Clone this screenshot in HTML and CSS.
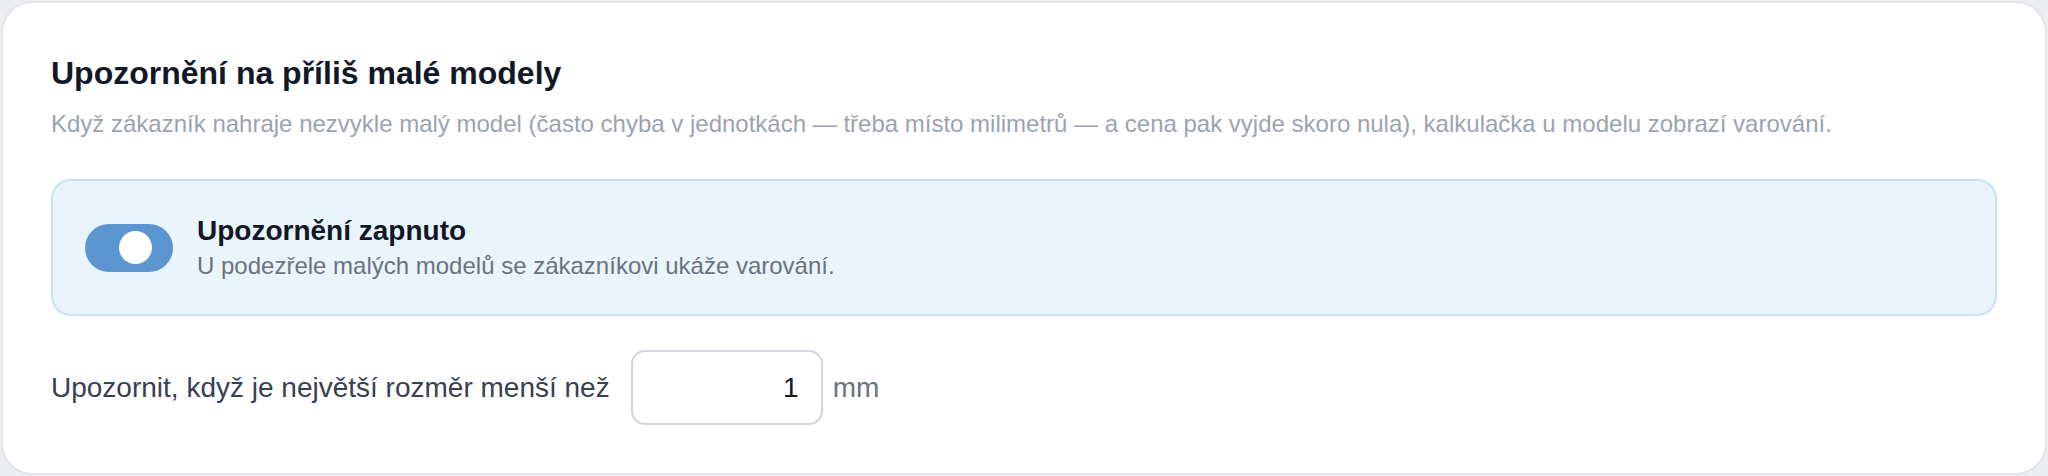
FILE: index.html
```html
<!DOCTYPE html>
<html lang="cs">
<head>
<meta charset="utf-8">
<title>Upozornění na příliš malé modely</title>
<link rel="stylesheet" href="styles.css">
</head>
<body>
<section class="card">
  <h2 class="title">Upozornění na příliš malé modely</h2>
  <p class="desc">Když zákazník nahraje nezvykle malý model (často chyba v jednotkách — třeba místo milimetrů — a cena pak vyjde skoro nula), kalkulačka u modelu zobrazí varování.</p>
  <div class="notice">
    <span class="toggle" role="switch" aria-checked="true"><span class="knob"></span></span>
    <div class="notice-text">
      <div class="notice-title">Upozornění zapnuto</div>
      <div class="notice-sub">U podezřele malých modelů se zákazníkovi ukáže varování.</div>
    </div>
  </div>
  <div class="row">
    <label class="row-label" for="limit">Upozornit, když je největší rozměr menší než</label>
    <input class="num" id="limit" type="text" value="1">
    <span class="unit">mm</span>
  </div>
</section>
</body>
</html>
```

FILE: styles.css
```css
* { box-sizing: border-box; }
html, body { margin: 0; }
body {
  background: #eceef2;
  padding: 1px;
  font-family: "Liberation Sans", Arial, sans-serif;
  height: 476px;
}
.card {
  background: #fff;
  border: 2px solid #e3e5e9;
  border-radius: 32px;
  padding: 50px 48px 40px 48px;
  height: 474px;
}
.title {
  margin: 0;
  font-size: 32px;
  font-weight: 700;
  color: #111827;
  line-height: 40px;
}
.desc {
  margin: 15px 0 0;
  font-size: 24px;
  color: #9ca3af;
  line-height: 32px;
}
.notice {
  margin-top: 39px;
  display: flex;
  align-items: center;
  gap: 24px;
  background: #eaf4fb;
  border: 2px solid #c9e0f5;
  border-radius: 20px;
  padding: 0 32px;
  height: 137px;
}
.toggle {
  flex: none;
  width: 88px;
  height: 48px;
  border-radius: 24px;
  background: #5b96d1;
  display: flex;
  align-items: center;
  padding-left: 34px;
}
.knob {
  width: 33px;
  height: 33px;
  border-radius: 50%;
  background: #fff;
}
.notice-text { padding-top: 2px; }
.notice-title {
  font-size: 28px;
  font-weight: 700;
  color: #111827;
  line-height: 34px;
}
.notice-sub {
  font-size: 24px;
  color: #6b7280;
  line-height: 34px;
  margin-top: 1px;
}
.row {
  margin-top: 34px;
  display: flex;
  align-items: center;
  gap: 21px;
}
.row-label {
  font-size: 28px;
  color: #374151;
}
.num {
  width: 192px;
  height: 75px;
  border: 2px solid #d1d5db;
  border-radius: 14px;
  font-family: "Liberation Sans", Arial, sans-serif;
  font-size: 28px;
  color: #111827;
  text-align: right;
  padding: 0 22px;
  outline: none;
}
.unit {
  font-size: 28px;
  color: #6b7280;
  margin-left: -11px;
}
```
